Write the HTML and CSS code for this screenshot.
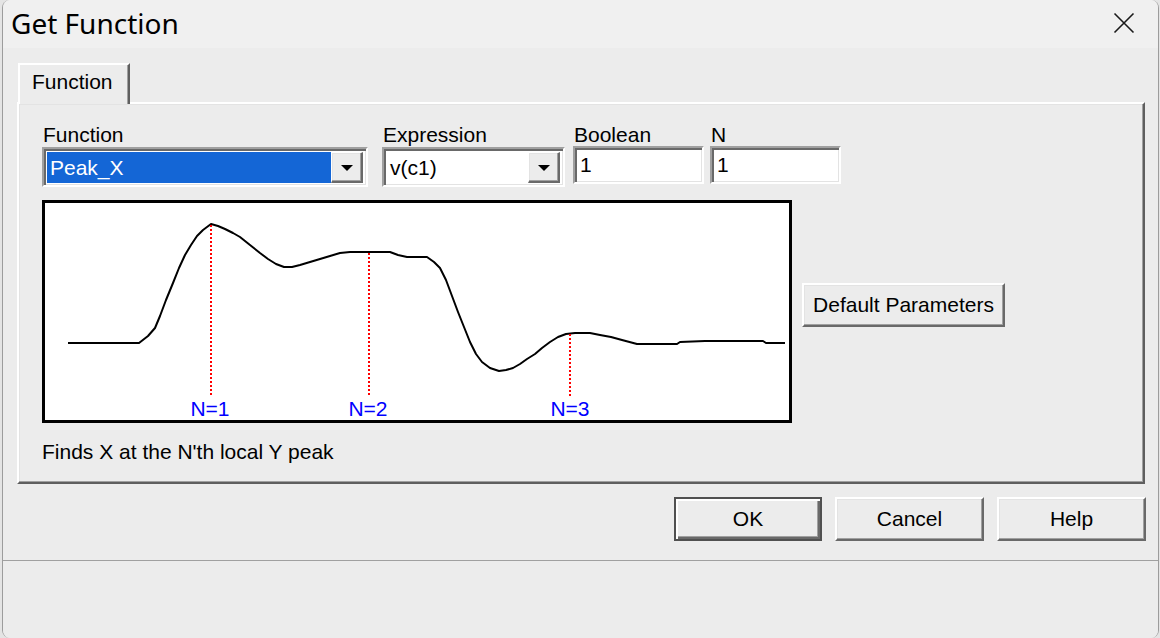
FILE: index.html
```html
<!DOCTYPE html>
<html>
<head>
<meta charset="utf-8">
<link rel="stylesheet" href="styles.css">
</head>
<body>
<div class="window">
  <div class="titlebar">
    <span class="title">Get Function</span>
    <svg class="close" width="22" height="22" viewBox="0 0 22 22"><path d="M1.5 1.5 L20.5 20.5 M20.5 1.5 L1.5 20.5" stroke="#1a1a1a" stroke-width="1.6" fill="none"/></svg>
  </div>
  <div class="client">
    <div class="tabs"><div class="tab">Function</div></div>
    <div class="panel">
      <div class="fields">
        <div class="field">
          <div class="label">Function</div>
          <div class="combo combo-func">
            <div class="combo-text selected">Peak_X</div>
            <div class="drop"><span class="arrow"></span></div>
          </div>
        </div>
        <div class="field">
          <div class="label">Expression</div>
          <div class="combo combo-expr">
            <div class="combo-text">v(c1)</div>
            <div class="drop"><span class="arrow"></span></div>
          </div>
        </div>
        <div class="field">
          <div class="label">Boolean</div>
          <div class="edit">1</div>
        </div>
        <div class="field">
          <div class="label">N</div>
          <div class="edit">1</div>
        </div>
      </div>
      <div class="chart-row">
        <svg class="chart" viewBox="45 203 744 217" preserveAspectRatio="none">
          <polyline class="curve" points="68,343 139,343 148,336 155,328 160,316 166,300 173,283 179,268 185,255 191,245 197,236 203,230 211,224 218,226 225,229 233,233 240,237 250,245 260,253 268,259 276,264 284,267 292,267 300,265 310,262 320,259 330,256 340,253 350,252 390,252 398,255 407,257 427,257 434,262 440,268 446,280 452,296 458,312 464,327 470,342 476,354 482,362 490,368 499,371 506,370 513,368 520,364 527,359 535,354 542,348 550,342 558,337 566,334 575,333 590,333 600,335 611,337 622,340 637,344 677,344 680,342 705,341 763,341 766,343 785,343"/>
          <line class="marker" x1="211" y1="225" x2="211" y2="396"/>
          <line class="marker" x1="369" y1="253" x2="369" y2="396"/>
          <line class="marker" x1="570" y1="334" x2="570" y2="396"/>
          <text class="nlabel" x="210" y="416">N=1</text>
          <text class="nlabel" x="368" y="416">N=2</text>
          <text class="nlabel" x="570" y="416">N=3</text>
        </svg>
        <div class="btn defaults">Default Parameters</div>
      </div>
      <div class="desc">Finds X at the N'th local Y peak</div>
    </div>
    <div class="buttons">
      <div class="btn action default">OK</div>
      <div class="btn action">Cancel</div>
      <div class="btn action">Help</div>
    </div>
  </div>
  <div class="status"></div>
</div>
</body>
</html>
```

FILE: styles.css
```css
html, body {
  margin: 0;
  padding: 0;
  background: #e4e4e4;
}
body {
  width: 1160px;
  height: 638px;
  overflow: hidden;
}
.window {
  margin-left: 2px;
  width: 1157px;
  height: 638px;
  box-sizing: border-box;
  border-left: 1px solid #9c9c9c;
  border-right: 1px solid #9c9c9c;
  border-radius: 8px;
  background: #ececec;
  overflow: hidden;
  display: flex;
  flex-direction: column;
  font-family: "Liberation Sans", Arial, sans-serif;
  font-size: 21px;
  color: #000;
}
.titlebar {
  height: 48px;
  flex: none;
  background: #f0f0f0;
  display: flex;
  align-items: center;
  justify-content: space-between;
  padding: 0 23px 0 8px;
}
.title {
  font-family: "Noto Sans", "Open Sans", sans-serif;
  font-size: 28px;
  line-height: 46px;
  color: #000;
  margin-top: -2px;
}
.close {
  display: block;
  margin-top: -2px;
}
.client {
  padding: 15px 12px 0 14px;
  border-bottom: 1px solid #a0a0a0;
  flex: none;
  height: 513px;
  box-sizing: border-box;
  display: flex;
  flex-direction: column;
}
.tabs {
  display: flex;
  height: 39px;
  position: relative;
  z-index: 1;
}
.tab {
  margin-left: 1px;
  width: 112px;
  height: 41px;
  box-sizing: border-box;
  border-top: 2px solid #fff;
  border-left: 2px solid #fff;
  border-right: 2px solid #5f5f5f;
  box-shadow: inset -1px 0 0 #a0a0a0;
  background: #ececec;
  padding: 0 0 0 12px;
  line-height: 34px;
}
.panel {
  width: 1128px;
  height: 382px;
  box-sizing: border-box;
  border-top: 2px solid #fff;
  border-left: 2px solid #fff;
  border-right: 2px solid #5f5f5f;
  border-bottom: 2px solid #5f5f5f;
  box-shadow: inset -1px -1px 0 #a0a0a0, inset 1px 1px 0 #e3e3e3;
  padding: 19px 0 0 23px;
}
.fields {
  display: flex;
  align-items: flex-start;
}
.field {
  display: flex;
  flex-direction: column;
}
.field + .field {
  margin-left: 14px;
}
.field:nth-child(3) {
  margin-left: 8px;
}
.field:nth-child(4) {
  margin-left: 6px;
}
.label {
  line-height: 24px;
  height: 24px;
  padding-left: 1px;
}
.combo {
  height: 40px;
  box-sizing: border-box;
  border-top: 2px solid #a0a0a0;
  border-left: 2px solid #a0a0a0;
  border-right: 2px solid #fff;
  border-bottom: 2px solid #fff;
  box-shadow: inset 2px 2px 0 #696969, inset -1px -1px 0 #e3e3e3;
  background: #fff;
  display: flex;
  padding: 3px 3px 2px 3px;
}
.combo-func { width: 326px; }
.combo-expr { width: 183px; }
.combo-text {
  flex: 1;
  line-height: 31px;
  padding-left: 3px;
  white-space: nowrap;
  overflow: hidden;
}
.combo-text.selected {
  background: #1466d6;
  color: #fff;
}
.drop {
  width: 32px;
  flex: none;
  box-sizing: border-box;
  background: #ececec;
  border-top: 1px solid #fff;
  border-left: 1px solid #fff;
  border-right: 2px solid #696969;
  border-bottom: 2px solid #696969;
  box-shadow: inset -1px -1px 0 #a0a0a0, inset 1px 1px 0 #e3e3e3;
  display: flex;
  align-items: center;
  justify-content: center;
}
.arrow {
  width: 0;
  height: 0;
  border-left: 6px solid transparent;
  border-right: 6px solid transparent;
  border-top: 6px solid #000;
  margin-top: 2px;
}
.edit {
  width: 131px;
  height: 38px;
  box-sizing: border-box;
  border-top: 2px solid #a0a0a0;
  border-left: 2px solid #a0a0a0;
  border-right: 2px solid #fff;
  border-bottom: 2px solid #fff;
  box-shadow: inset 2px 2px 0 #696969, inset -1px -1px 0 #e3e3e3;
  background: #fff;
  line-height: 34px;
  padding-left: 5px;
  margin-top: -1px;
}
.chart-row {
  display: flex;
  align-items: flex-start;
  margin-top: 13px;
}
.chart {
  display: block;
  width: 750px;
  height: 223px;
  box-sizing: border-box;
  border: 3px solid #000;
  background: #fff;
  flex: none;
}
.curve {
  fill: none;
  stroke: #000;
  stroke-width: 2;
  stroke-linejoin: round;
}
.marker {
  stroke: #ff0000;
  stroke-width: 2;
  stroke-dasharray: 2 2;
}
.nlabel {
  fill: #0000ff;
  font-family: "Liberation Sans", Arial, sans-serif;
  font-size: 21px;
  text-anchor: middle;
}
.btn {
  box-sizing: border-box;
  background: #ececec;
  border-top: 2px solid #fff;
  border-left: 2px solid #fff;
  border-right: 2px solid #696969;
  border-bottom: 2px solid #696969;
  box-shadow: inset -1px -1px 0 #a0a0a0, inset 1px 1px 0 #e3e3e3;
  display: flex;
  align-items: center;
  justify-content: center;
  white-space: nowrap;
}
.defaults {
  width: 203px;
  height: 44px;
  margin-left: 10px;
  margin-top: 83px;
}
.desc {
  margin-top: 17px;
  line-height: 24px;
}
.buttons {
  display: flex;
  justify-content: flex-end;
  margin-top: 13px;
}
.action {
  width: 149px;
  height: 44px;
  margin-left: 13px;
}
.action.default {
  width: 148px;
  border: 2px solid #505050;
  box-shadow: inset 2px 2px 0 #fff, inset -2px -2px 0 #696969, inset -3px -3px 0 #a0a0a0;
}
.status {
  flex: 1;
  background: #ececec;
}
```
